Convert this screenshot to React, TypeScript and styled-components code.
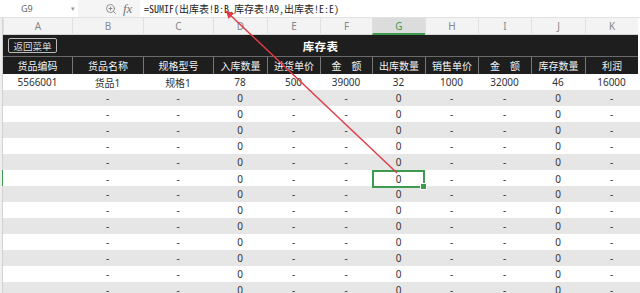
import styled, { createGlobalStyle } from "styled-components";
import { ZoomIn } from "lucide-react";

const COLS = "3px 69px 71px 70px 54px 53px 52px 53px 53px 53px 54px 53px";
const LETTERS = ["A", "B", "C", "D", "E", "F", "G", "H", "I", "J", "K"];
const HEADERS = ["货品编码", "货品名称", "规格型号", "入库数量", "进货单价", "金　额", "出库数量", "销售单价", "金　额", "库存数量", "利润"];
const FIRST = ["5566001", "货品1", "规格1", "78", "500", "39000", "32", "1000", "32000", "46", "16000"];
const EMPTY = ["", "-", "-", "0", "-", "-", "0", "-", "-", "0", "-"];
const SELECTED_ROW = 6;
const SELECTED_COL = 6;

const GlobalStyle = createGlobalStyle`
  body {
    margin: 0;
    background: #ffffff;
    font-family: "Noto Sans", "Noto Sans CJK SC", sans-serif;
  }
`;

const Page = styled.div`
  position: relative;
  width: 640px;
  height: 293px;
  overflow: hidden;
  background: #ffffff;
`;

const FormulaBar = styled.div`
  display: flex;
  align-items: center;
  height: 18px;
  background: #f5f5f5;
  border-bottom: 1px solid #e2e2e2;
  box-sizing: border-box;
`;

const NameBox = styled.div`
  display: flex;
  align-items: center;
  justify-content: space-between;
  width: 78px;
  height: 17px;
  padding: 0 3px 0 21px;
  box-sizing: border-box;
  background: #ffffff;
  font-size: 9px;
  color: #666;
`;

const Chevron = styled.span`
  font-size: 7px;
  color: #999;
`;

const Tools = styled.div`
  display: flex;
  align-items: center;
  gap: 6px;
  padding-left: 27px;
  width: 62px;
  box-sizing: border-box;
  color: #777;
`;

const Fx = styled.span`
  font-family: "Liberation Serif", serif;
  font-style: italic;
  font-size: 13px;
  color: #777;
`;

const FormulaInput = styled.div`
  flex: 1;
  height: 17px;
  display: flex;
  align-items: center;
  padding-left: 4px;
  background: #ffffff;
  font-family: "Noto Sans Mono CJK SC", "Liberation Mono", "Noto Sans CJK SC", monospace;
  font-size: 10px;
  color: #222;
  white-space: nowrap;
`;

const Row = styled.div<{ $h: number; $bg?: string }>`
  display: grid;
  grid-template-columns: ${COLS};
  height: ${(p) => p.$h}px;
  background: ${(p) => p.$bg ?? "transparent"};
`;

const RowHead = styled.div<{ $active?: boolean }>`
  background: #efefef;
  border-right: 1px solid ${(p) => (p.$active ? "#3d9a4f" : "#d2d2d2")};
  box-sizing: border-box;
`;

const ColHead = styled.div<{ $active?: boolean }>`
  display: flex;
  align-items: center;
  justify-content: center;
  background: ${(p) => (p.$active ? "#dcdcdc" : "#f3f3f3")};
  border-left: 1px solid #e0e0e0;
  border-bottom: ${(p) => (p.$active ? "2px solid #3d9a4f" : "1px solid #d4d4d4")};
  box-sizing: border-box;
  font-size: 10px;
  color: ${(p) => (p.$active ? "#3d9a4f" : "#888")};
`;

const TitleBand = styled.div`
  grid-column: 2 / -1;
  position: relative;
  display: flex;
  align-items: center;
  justify-content: center;
  background: #1e1e1e;
  border-bottom: 1px solid #6a6a6a;
  box-sizing: border-box;
`;

const BackButton = styled.div`
  position: absolute;
  left: 5px;
  top: 3px;
  display: flex;
  align-items: center;
  justify-content: center;
  width: 49px;
  height: 15px;
  border: 1px solid #bbbbbb;
  border-radius: 2px;
  box-sizing: border-box;
  font-size: 9.5px;
  color: #dddddd;
`;

const Title = styled.div`
  font-size: 11.5px;
  font-weight: bold;
  color: #ffffff;
  letter-spacing: 0.3px;
`;

const HeadCell = styled.div<{ $first?: boolean }>`
  display: flex;
  align-items: center;
  justify-content: center;
  background: #1e1e1e;
  border-left: ${(p) => (p.$first ? "none" : "1px solid #777")};
  box-sizing: border-box;
  font-size: 10px;
  color: #f2f2f2;
  white-space: nowrap;
`;

const Cell = styled.div<{ $selected?: boolean }>`
  position: relative;
  display: flex;
  align-items: center;
  justify-content: center;
  box-sizing: border-box;
  font-size: 10px;
  color: #333;
  border: ${(p) => (p.$selected ? "2px solid #3d9a4f" : "none")};

  &::after {
    content: "";
    display: ${(p) => (p.$selected ? "block" : "none")};
    position: absolute;
    right: -4px;
    bottom: -4px;
    width: 5px;
    height: 5px;
    background: #3d9a4f;
    border: 1px solid #ffffff;
  }
`;

const Overlay = styled.svg`
  position: absolute;
  left: 0;
  top: 0;
  pointer-events: none;
`;

const dataRows = Array.from({ length: 14 }, (_, i) => (i === 0 ? FIRST : EMPTY));

export default function App() {
  return (
    <Page>
      <GlobalStyle />
      <FormulaBar>
        <NameBox>
          <span>G9</span>
          <Chevron>▾</Chevron>
        </NameBox>
        <Tools>
          <ZoomIn size={12} strokeWidth={1.6} />
          <Fx>fx</Fx>
        </Tools>
        <FormulaInput>=SUMIF(出库表!B:B,库存表!A9,出库表!E:E)</FormulaInput>
      </FormulaBar>

      <Row $h={17}>
        <RowHead />
        {LETTERS.map((l, i) => (
          <ColHead key={l} $active={i === SELECTED_COL}>
            {l}
          </ColHead>
        ))}
      </Row>

      <Row $h={22}>
        <RowHead />
        <TitleBand>
          <BackButton>返回菜单</BackButton>
          <Title>库存表</Title>
        </TitleBand>
      </Row>

      <Row $h={17}>
        <RowHead />
        {HEADERS.map((h, i) => (
          <HeadCell key={i} $first={i === 0}>
            {h}
          </HeadCell>
        ))}
      </Row>

      {dataRows.map((cells, r) => (
        <Row key={r} $h={16} $bg={r % 2 === 1 ? "#e6e6e6" : "#ffffff"}>
          <RowHead $active={r === SELECTED_ROW} />
          {cells.map((c, i) => (
            <Cell key={i} $selected={r === SELECTED_ROW && i === SELECTED_COL}>
              {c}
            </Cell>
          ))}
        </Row>
      ))}

      <Overlay width={640} height={293}>
        <defs>
          <marker id="head" markerWidth="8" markerHeight="8" refX="6" refY="4" orient="auto" markerUnits="userSpaceOnUse">
            <path d="M0,0 L8,4 L0,8 Z" fill="#e23b45" />
          </marker>
        </defs>
        <line x1={397} y1={173} x2={227} y2={12} stroke="#e23b45" strokeWidth={1.4} markerEnd="url(#head)" />
      </Overlay>
    </Page>
  );
}
